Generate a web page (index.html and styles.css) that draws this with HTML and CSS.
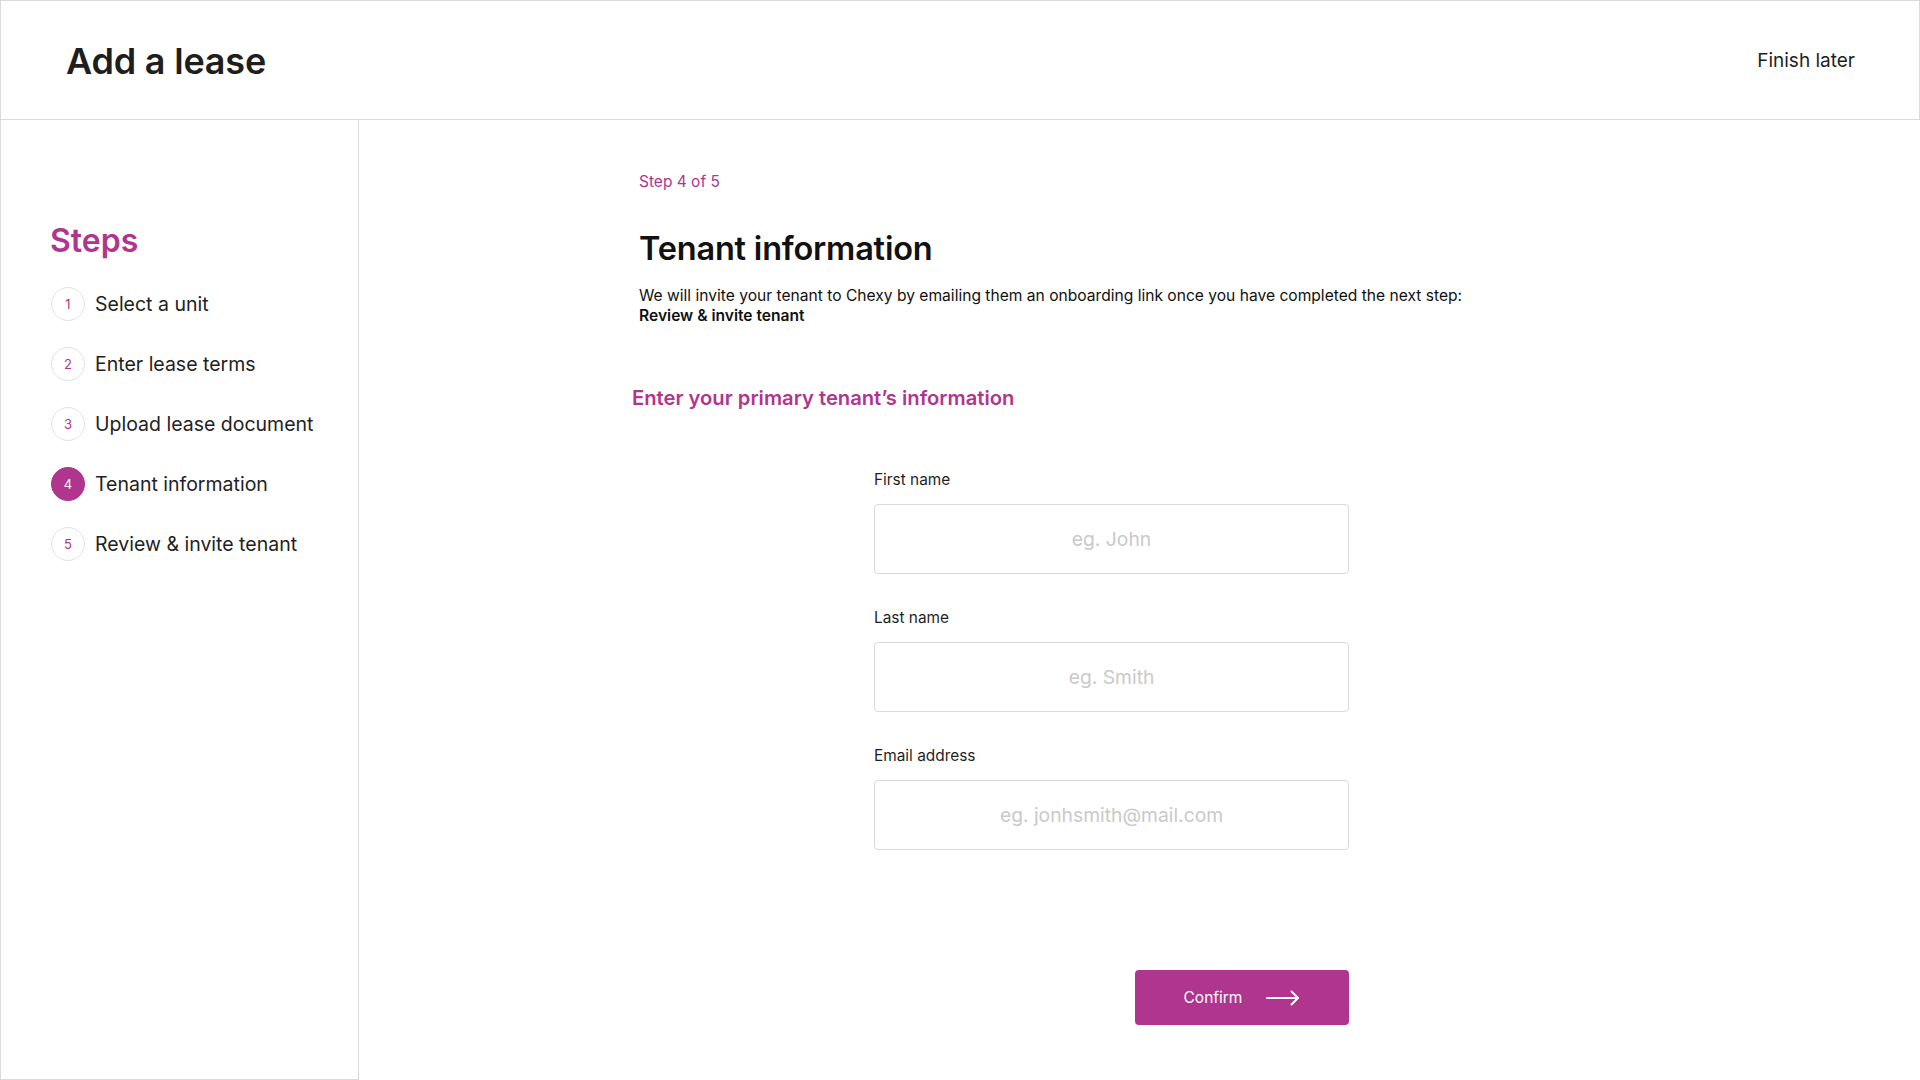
FILE: index.html
```html
<!DOCTYPE html>
<html lang="en">
<head>
<meta charset="utf-8">
<title>Add a lease</title>
<link rel="stylesheet" href="styles.css">
</head>
<body>
<header class="topbar">
  <h1 class="topbar-title">Add a lease</h1>
  <a class="topbar-link" href="#">Finish later</a>
</header>
<div class="layout">
  <aside class="sidebar">
    <h2 class="sidebar-title">Steps</h2>
    <ol class="steps">
      <li class="step"><span class="step-num">1</span><span class="step-text">Select a unit</span></li>
      <li class="step"><span class="step-num">2</span><span class="step-text">Enter lease terms</span></li>
      <li class="step"><span class="step-num">3</span><span class="step-text">Upload lease document</span></li>
      <li class="step step-active"><span class="step-num">4</span><span class="step-text">Tenant information</span></li>
      <li class="step"><span class="step-num">5</span><span class="step-text">Review &amp; invite tenant</span></li>
    </ol>
  </aside>
  <main class="main">
    <div class="content">
      <p class="step-label">Step 4 of 5</p>
      <h2 class="page-title">Tenant information</h2>
      <p class="intro">We will invite your tenant to Chexy by emailing them an onboarding link once you have completed the next step:<br><strong>Review &amp; invite tenant</strong></p>
      <h3 class="section-title">Enter your primary tenant’s information</h3>
      <form class="form">
        <label class="field">
          <span class="field-label">First name</span>
          <input class="field-input" type="text" placeholder="eg. John">
        </label>
        <label class="field">
          <span class="field-label">Last name</span>
          <input class="field-input" type="text" placeholder="eg. Smith">
        </label>
        <label class="field">
          <span class="field-label">Email address</span>
          <input class="field-input" type="email" placeholder="eg. jonhsmith@mail.com">
        </label>
        <div class="actions">
          <button class="btn-primary" type="button">
            <span>Confirm</span>
            <svg class="btn-arrow" width="34" height="16" viewBox="0 0 34 16" fill="none" stroke="#fff" stroke-width="2" stroke-linecap="round" stroke-linejoin="round"><path d="M1 8H32"/><path d="M25.5 1.5L32 8L25.5 14.5"/></svg>
          </button>
        </div>
      </form>
    </div>
  </main>
</div>
</body>
</html>
```
FILE: styles.css
```css
* { box-sizing: border-box; }

html, body {
  margin: 0;
  padding: 0;
  height: 100%;
}

body {
  font-family: Inter, "Noto Sans", "DejaVu Sans", sans-serif;
  color: #1f1f1f;
  background: #fff;
  width: 1920px;
  height: 1080px;
  overflow: hidden;
  display: flex;
  flex-direction: column;
}

.topbar {
  height: 120px;
  flex: none;
  display: flex;
  align-items: center;
  justify-content: space-between;
  padding: 2px 64px 0 65px;
  border: 1px solid #d9d9d9;
}

.topbar-title {
  margin: 0;
  font-size: 36px;
  line-height: 40px;
  font-weight: 600;
  color: #1e1e1e;
  letter-spacing: -0.2px;
}

.topbar-link {
  font-size: 19px;
  line-height: 24px;
  color: #1e1e1e;
  text-decoration: none;
}

.layout {
  flex: 1;
  display: flex;
  min-height: 0;
}

.sidebar {
  width: 359px;
  flex: none;
  border: 1px solid #d9d9d9;
  border-top: 0;
  padding: 101px 0 0 50px;
}

.sidebar-title {
  margin: 0 0 26px;
  font-size: 32px;
  line-height: 40px;
  font-weight: 600;
  color: #b0358f;
  margin-left: -1px;
}

.steps {
  list-style: none;
  margin: 0;
  padding: 0;
  display: flex;
  flex-direction: column;
  gap: 26px;
}

.step {
  display: flex;
  align-items: center;
  gap: 10px;
  height: 34px;
}

.step-num {
  width: 34px;
  height: 34px;
  border-radius: 50%;
  border: 1px solid #e2e2e2;
  display: flex;
  align-items: center;
  justify-content: center;
  font-size: 13px;
  color: #b0358f;
  flex: none;
}

.step-active .step-num {
  background: #b0358f;
  border-color: #b0358f;
  color: #fff;
}

.step-text {
  font-size: 19.5px;
  color: #222;
}

.main {
  flex: 1;
  padding: 52px 0 0 280px;
}

.content {
  width: 900px;
}

.step-label {
  margin: 0;
  font-size: 15.5px;
  line-height: 20px;
  color: #b0358f;
}

.page-title {
  margin: 37px 0 0;
  font-size: 32.5px;
  line-height: 40px;
  font-weight: 600;
  color: #111;
  letter-spacing: -0.2px;
}

.intro {
  margin: 17px 0 0;
  font-size: 15.6px;
  line-height: 20px;
  color: #111;
}

.intro strong {
  font-weight: 600;
}

.section-title {
  margin: 60px 0 0 -7px;
  font-size: 20.2px;
  line-height: 24px;
  font-weight: 600;
  color: #b0358f;
}

.form {
  margin: 61px 0 0 235px;
  width: 475px;
  display: flex;
  flex-direction: column;
}

.field {
  display: flex;
  flex-direction: column;
  margin-bottom: 35px;
}

.field:last-of-type {
  margin-bottom: 0;
}

.field-label {
  font-size: 15.4px;
  line-height: 18px;
  color: #1f1f1f;
  margin-bottom: 15px;
}

.field-input {
  height: 70px;
  border: 1px solid #d9d9d9;
  border-radius: 4px;
  font-family: inherit;
  font-size: 19.3px;
  text-align: center;
  color: #1f1f1f;
  outline: none;
  padding: 0 16px;
}

.field-input::placeholder {
  color: #c9c9c9;
}

.actions {
  display: flex;
  justify-content: flex-end;
  margin-top: 120px;
}

.btn-primary {
  width: 214px;
  height: 55px;
  border: 0;
  border-radius: 4px;
  background: #b0358f;
  color: #fff;
  font-family: inherit;
  font-size: 15.5px;
  display: flex;
  align-items: center;
  justify-content: center;
  gap: 24px;
  cursor: pointer;
}

.btn-arrow {
  display: block;
}
```
